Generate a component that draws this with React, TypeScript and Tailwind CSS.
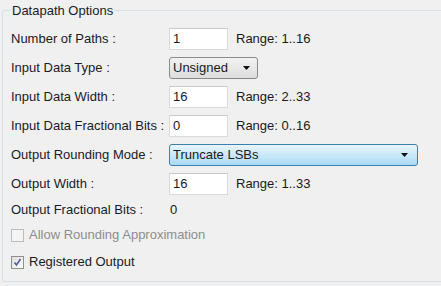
import React from "react"

const font = { fontFamily: '"Liberation Sans", Arial, sans-serif' }

function Field({ value }: { value: string }) {
  return (
    <div className="flex h-[22px] w-[59px] items-center border border-[#dadada] border-t-[#c9c9c9] bg-white pl-[3px] text-[13px] text-[#1a1a1a]">
      {value}
    </div>
  )
}

function Arrow() {
  return (
    <svg width="7" height="4" viewBox="0 0 7 4" className="shrink-0">
      <path d="M0 0h7L3.5 4z" fill="#111" />
    </svg>
  )
}

function Row({ label, children }: { label: string; children: React.ReactNode }) {
  return (
    <div className="flex h-[22px] items-center">
      <div className="w-[158px] shrink-0 text-[13px] text-[#1a1a28]">{label}</div>
      {children}
    </div>
  )
}

function Range({ text }: { text: string }) {
  return <span className="ml-[8px] text-[13px] text-[#1a1a1a]">{text}</span>
}

export default function App() {
  return (
    <div className="h-[286px] w-[441px] overflow-hidden bg-[#f0f0f0]" style={font}>
      <fieldset className="ml-[2px] mt-[3px] h-[279px] w-[460px] rounded-[3px] border border-[#d5dfe5] pl-[8px]">
        <legend className="px-[1px] text-[13px] leading-[15px] text-[#1a1a28]">Datapath Options</legend>

        <div className="mt-[10px] flex flex-col gap-[7px]">
          <Row label="Number of Paths :">
            <Field value="1" />
            <Range text="Range: 1..16" />
          </Row>
          <Row label="Input Data Type :">
            <div className="flex h-[22px] w-[89px] items-center justify-between rounded-[3px] border border-[#8a8a8a] bg-gradient-to-b from-[#f3f3f3] to-[#dddddd] pl-[3px] pr-[7px] text-[13px] text-[#1a1a1a]">
              <span>Unsigned</span>
              <Arrow />
            </div>
          </Row>
          <Row label="Input Data Width :">
            <Field value="16" />
            <Range text="Range: 2..33" />
          </Row>
          <Row label="Input Data Fractional Bits :">
            <Field value="0" />
            <Range text="Range: 0..16" />
          </Row>
          <Row label="Output Rounding Mode :">
            <div className="flex h-[22px] w-[249px] items-center justify-between rounded-[3px] border border-[#3c7fb1] bg-gradient-to-b from-[#eaf6fd] to-[#a9daf5] pl-[3px] pr-[9px] text-[13px] text-[#1a1a1a]">
              <span>Truncate LSBs</span>
              <Arrow />
            </div>
          </Row>
          <Row label="Output Width :">
            <Field value="16" />
            <Range text="Range: 1..33" />
          </Row>
        </div>

        <div className="mt-[4px]">
          <Row label="Output Fractional Bits :">
            <span className="pl-[1px] text-[13px] text-[#1a1a1a]">0</span>
          </Row>
        </div>

        <div className="mt-[3px] flex h-[22px] items-center gap-[5px]">
          <div className="h-[13px] w-[13px] border border-[#bcbcbc] bg-[#f4f4f4]" />
          <span className="text-[13px] text-[#8d8d8d]">Allow Rounding Approximation</span>
        </div>

        <div className="mt-[5px] flex h-[22px] items-center gap-[5px]">
          <div className="flex h-[13px] w-[13px] items-center justify-center border border-[#8e8f8f] bg-gradient-to-br from-[#dcdcdc] to-[#ffffff]">
            <svg width="9" height="9" viewBox="0 0 9 9">
              <path d="M1.5 4.5l2 2.5L7.5 1" fill="none" stroke="#4b5f94" strokeWidth="1.6" />
            </svg>
          </div>
          <span className="text-[13px] text-[#1a1a28]">Registered Output</span>
        </div>
      </fieldset>
    </div>
  )
}
